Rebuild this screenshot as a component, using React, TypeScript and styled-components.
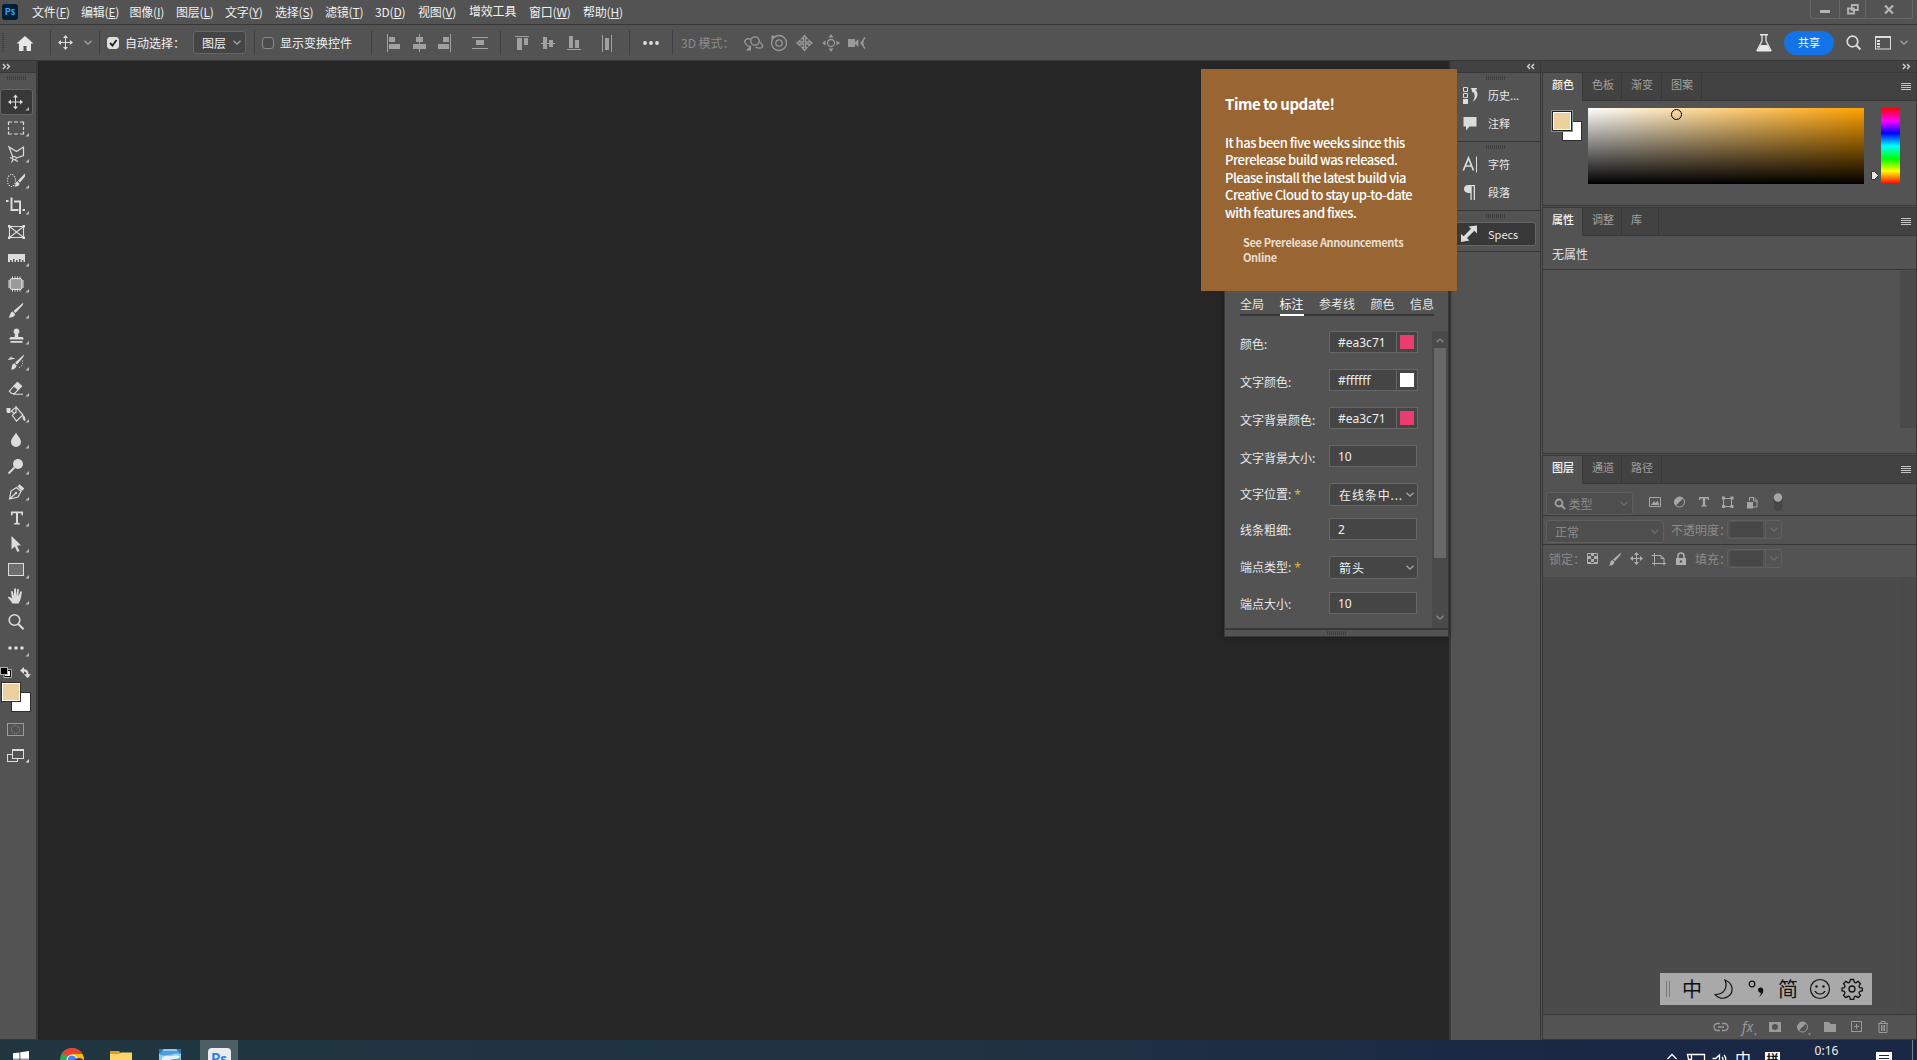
import {FC, ReactNode} from 'react';
import styled, {createGlobalStyle, css} from 'styled-components';

const CJK = `"Noto Sans CJK SC", sans-serif`;
const LINE = '#383838';
const CHROME = '#535353';

const GlobalStyle = createGlobalStyle`
    body {
        margin: 0;
        overflow: hidden;
        background: #262626;
    }
    * {
        box-sizing: border-box;
    }
    svg {
        display: block;
        flex: none;
    }
`;

const Screen = styled.div`
    width: 1917px;
    height: 1060px;
    display: flex;
    flex-direction: column;
    position: relative;
    overflow: hidden;
    background: ${CHROME};
    color: #f0f0f0;
    font-family: ${CJK};
    font-size: 12px;
    white-space: nowrap;
`;

/* ---------- menu bar ---------- */

const MenuBar = styled.header`
    display: flex;
    align-items: center;
    height: 25px;
    flex: none;
    border-bottom: 1px solid ${LINE};
`;

const PsBadge = styled.div`
    width: 16px;
    height: 16px;
    margin: 0 14px 0 2px;
    border-radius: 3px;
    background: #001e36;
    color: #31a8ff;
    font: 700 9px/15px ${CJK};
    text-align: center;
`;

const MenuItem = styled.span<{ $w: number; $up?: boolean }>`
    width: ${p => p.$w}px;
    flex: none;
    letter-spacing: -0.2px;
    line-height: 18px;
    padding-bottom: ${p => (p.$up ? 3 : 1)}px;
`;

const WindowButtons = styled.div`
    display: flex;
    width: 103px;
    height: 19px;
    margin: 0 4px 5px auto;
    border: 1px solid #666;
    border-top: 0;
    border-radius: 0 0 3px 3px;
`;

const WindowButton = styled.div<{ $w: number }>`
    width: ${p => p.$w}px;
    display: flex;
    align-items: center;
    justify-content: center;
    & + & {
        border-left: 1px solid #666;
    }
`;

/* ---------- options bar ---------- */

const OptionsBar = styled.div`
    display: flex;
    align-items: center;
    height: 36px;
    flex: none;
    border-bottom: 1px solid ${LINE};
`;

const Slot = styled.div<{ $w: number; $justify?: string; $dim?: boolean }>`
    width: ${p => p.$w}px;
    flex: none;
    display: flex;
    align-items: center;
    justify-content: ${p => p.$justify || 'center'};
    color: ${p => (p.$dim ? '#8b8b8b' : '#f0f0f0')};
`;

const Divider = styled.i`
    width: 1px;
    height: 25px;
    flex: none;
    background: #404040;
`;

const Grip = styled.i<{ $vertical?: boolean }>`
    flex: none;
    display: block;
    ${p => p.$vertical ? css`
        width: 2px;
        height: 20px;
        background: repeating-linear-gradient(180deg, #3e3e3e 0 1px, transparent 1px 2px);
    ` : css`
        width: 20px;
        height: 4px;
        margin: 0 auto;
        background: repeating-linear-gradient(90deg, #3e3e3e 0 1px, transparent 1px 2px);
    `}
`;

const Checkbox = styled.span<{ $on?: boolean }>`
    width: 12px;
    height: 12px;
    flex: none;
    border-radius: 3px;
    border: 1px solid ${p => (p.$on ? '#e0e0e0' : '#8a8a8a')};
    background: ${p => (p.$on ? '#e0e0e0' : '#4c4c4c')};
`;

const Select = styled.div<{ $w: number; $h: number; $dim?: boolean; $pad?: number; $spread?: number }>`
    display: flex;
    align-items: center;
    justify-content: space-between;
    flex: none;
    width: ${p => p.$w}px;
    height: ${p => p.$h}px;
    padding: 0 ${p => (p.$spread ? 2 : 3)}px 0 ${p => p.$pad || 8}px;
    letter-spacing: ${p => p.$spread || 0}px;
    border: 1px solid ${p => (p.$dim ? '#5f5f5f' : '#666')};
    border-radius: 3px;
    background: ${p => (p.$dim ? '#4e4e4e' : '#454545')};
    color: ${p => (p.$dim ? '#8b8b8b' : '#f0f0f0')};
`;

const ShareButton = styled.button`
    width: 53px;
    height: 24px;
    margin: 0 12px 0 11px;
    padding: 0 0 1px;
    border: 0;
    border-radius: 12px;
    background: #1473e6;
    color: #fff;
    font: 11px/22px ${CJK};
`;

/* ---------- workspace ---------- */

const Workspace = styled.main`
    display: flex;
    height: 979px;
    flex: none;
`;

const Toolbar = styled.aside`
    display: flex;
    flex-direction: column;
    width: 38px;
    flex: none;
    border-right: 2px solid ${LINE};
    border-bottom: 1px solid ${LINE};
`;

const DockHeader = styled.div<{ $justify?: string }>`
    display: flex;
    align-items: center;
    justify-content: ${p => p.$justify || 'flex-start'};
    height: 12px;
    flex: none;
    padding: 0 5px 0 2px;
    background: #424242;
    border-bottom: 1px solid ${LINE};
`;

const ToolGrip = styled.div`
    padding-top: 3px;
`;

const ToolList = styled.div`
    margin-top: 9px;
`;

const ToolCell = styled.div<{ $active?: boolean }>`
    width: 33px;
    height: 26px;
    border-radius: 3px;
    background: ${p => (p.$active ? '#383838' : 'transparent')};
    box-shadow: ${p => (p.$active ? 'inset 0 0 0 1px #666' : 'none')};
`;

const Canvas = styled.section`
    flex: 1;
    background: #262626;
`;

const IconDock = styled.aside`
    display: flex;
    flex-direction: column;
    width: 92px;
    flex: none;
    border-left: 2px solid ${LINE};
    border-right: 1px solid ${LINE};
`;

const DockGroup = styled.div<{ $h: number }>`
    height: ${p => p.$h}px;
    padding-top: 3px;
    border-bottom: 1px solid ${LINE};
`;

const DockButton = styled.div<{ $active?: boolean; $h: number }>`
    display: flex;
    align-items: center;
    gap: 8px;
    width: 85px;
    height: ${p => p.$h}px;
    padding-left: 9px;
    font-size: 11px;
    color: #e8e8e8;
    border-radius: 3px;
    background: ${p => (p.$active ? '#383838' : 'transparent')};
    box-shadow: ${p => (p.$active ? 'inset 0 0 0 1px #666' : 'none')};
`;

const SpecsSpacer = styled.i`
    display: block;
    height: 4px;
`;

const PanelDock = styled.aside`
    display: flex;
    flex-direction: column;
    width: 376px;
    flex: none;
    border-right: 1px solid ${LINE};
`;

const Panel = styled.section<{ $h: number }>`
    display: flex;
    flex-direction: column;
    height: ${p => p.$h}px;
    flex: none;
    margin-left: 1px;
    border-left: 1px solid ${LINE};
    border-bottom: 1px solid ${LINE};
    & + & {
        margin-top: 1px;
        border-top: 1px solid ${LINE};
    }
`;

const TabStrip = styled.div`
    display: flex;
    height: 28px;
    flex: none;
    background: #424242;
`;

const Tab = styled.div<{ $w: number; $active?: boolean }>`
    width: ${p => p.$w}px;
    height: 28px;
    padding-left: 9px;
    font-size: 11px;
    line-height: 23px;
    font-weight: ${p => (p.$active ? 500 : 400)};
    color: ${p => (p.$active ? '#f5f5f5' : '#a0a0a0')};
    background: ${p => (p.$active ? CHROME : '#424242')};
    border-right: 1px solid ${LINE};
    border-bottom: 1px solid ${p => (p.$active ? CHROME : LINE)};
`;

const TabRest = styled.div`
    flex: 1;
    display: flex;
    align-items: center;
    justify-content: flex-end;
    padding-right: 5px;
    border-bottom: 1px solid ${LINE};
`;

const ColorBody = styled.div`
    display: flex;
    padding: 7px 0 0 8px;
`;

const Ramp = styled.div`
    width: 276px;
    height: 76px;
    margin-left: 5px;
    position: relative;
    background: linear-gradient(180deg, transparent, #000), linear-gradient(90deg, #fff, #ffa200);
`;

const RampMarker = styled.i`
    position: absolute;
    left: 83px;
    top: 1px;
    width: 11px;
    height: 11px;
    border: 1px solid #000;
    border-radius: 50%;
`;

const HueBar = styled.div`
    width: 19px;
    height: 76px;
    background: linear-gradient(180deg, #f00, #f0f 17%, #00f 33%, #0ff 50%, #0f0 67%, #ff0 83%, #f00);
`;

const PropertiesNote = styled.div`
    height: 34px;
    padding-left: 9px;
    line-height: 36px;
    color: #e0e0e0;
    border-bottom: 1px solid ${LINE};
`;

const PropsScroll = styled.div`
    padding-top: 1px;
`;

const ScrollGutter = styled.div<{ $h: number }>`
    width: 16px;
    height: ${p => p.$h}px;
    margin-left: auto;
    background: #4a4a4a;
`;

const LayerRow = styled.div<{ $h: number; $top: number; $plain?: boolean }>`
    display: flex;
    align-items: flex-start;
    height: ${p => p.$h}px;
    flex: none;
    padding: ${p => p.$top}px 0 0 3px;
    color: #8b8b8b;
    border-bottom: ${p => (p.$plain ? 'none' : `1px solid ${LINE}`)};
`;

const RowLabel = styled.span<{ $w: number; $ml: number }>`
    width: ${p => p.$w}px;
    margin-left: ${p => p.$ml}px;
    flex: none;
    line-height: 19px;
`;

const NumberBox = styled.div`
    display: flex;
    align-items: center;
    width: 55px;
    height: 19px;
    padding-left: 2px;
    border: 1px solid #5f5f5f;
    border-radius: 3px;
`;

const NumberValue = styled.i`
    width: 34px;
    height: 15px;
    background: #474747;
    margin-right: 2px;
`;

const NumberArrow = styled.span`
    display: flex;
    align-items: center;
    justify-content: center;
    width: 16px;
    height: 17px;
    border-left: 1px solid #5f5f5f;
`;

const LayerList = styled.div`
    flex: 1;
    background: #4b4b4b;
    border-bottom: 1px solid ${LINE};
`;

const LayerFooter = styled.div`
    display: flex;
    align-items: center;
    justify-content: flex-end;
    height: 24px;
    flex: none;
    padding: 0 25px 1px 0;
`;

/* ---------- floating parts ---------- */

const SpecsPanel = styled.section`
    position: absolute;
    left: 1224px;
    top: 280px;
    width: 225px;
    height: 357px;
    display: flex;
    flex-direction: column;
    background: ${CHROME};
    border: 1px solid ${LINE};
    font-family: "Noto Sans", ${CJK};
    box-shadow: 0 0 6px rgba(0, 0, 0, 0.3);
`;

const SpecsTabs = styled.nav`
    display: flex;
    gap: 15.5px;
    width: 194px;
    height: 35px;
    flex: none;
    margin-left: 15px;
    padding-top: 15px;
    line-height: 18px;
    border-bottom: 2px solid ${LINE};
`;

const SpecsTab = styled.span<{ $active?: boolean }>`
    height: 20px;
    color: ${p => (p.$active ? '#fff' : '#e4e4e4')};
    border-bottom: 2px solid ${p => (p.$active ? '#fff' : 'transparent')};
`;

const SpecsBody = styled.div`
    display: flex;
    justify-content: space-between;
    height: 314px;
    flex: none;
    padding-top: 15px;
    border-bottom: 2px solid ${LINE};
`;

const SpecsForm = styled.div`
    padding-left: 15px;
`;

const SpecsRow = styled.div<{ $h: number; $down?: number }>`
    display: flex;
    height: ${p => p.$h}px;
    span:first-child {
        width: 89px;
        line-height: 23px;
        padding-top: ${p => p.$down || 0}px;
        color: #e8e8e8;
    }
`;

const Star = styled.b`
    margin-left: 3px;
    font-weight: 400;
    color: #d9b83c;
`;

const Field = styled.div<{ $w?: number }>`
    display: flex;
    width: ${p => p.$w || 88}px;
    height: 22px;
    padding-left: 8px;
    line-height: 21px;
    justify-content: space-between;
    border: 1px solid #666;
    background: #454545;
`;

const Chip = styled.i<{ $color: string }>`
    width: 20px;
    height: 20px;
    border: 3px solid #454545;
    background: ${p => p.$color};
    box-shadow: -1px 0 0 #666;
`;

const SpecsScroll = styled.div`
    display: flex;
    flex-direction: column;
    align-items: center;
    width: 16px;
    height: 297px;
    padding: 6px 0 7px;
    background: #4a4a4a;
`;

const SpecsThumb = styled.i`
    width: 12px;
    height: 210px;
    margin: 4px 0 auto;
    background: #686868;
`;

const SpecsFoot = styled.div`
    display: flex;
    align-items: center;
    justify-content: center;
    flex: 1;
`;

const Notice = styled.section`
    position: absolute;
    left: 1201px;
    top: 69px;
    width: 256px;
    height: 222px;
    padding: 24px 24px 0;
    background: #996633;
    color: #fff;
    font-weight: 500;
    letter-spacing: -0.5px;
    h3 {
        margin: 0 0 18px;
        font-size: 15px;
        line-height: 22px;
        font-weight: 700;
    }
    p {
        margin: 0 0 14px;
        padding-top: 1px;
        font-size: 13px;
        line-height: 17.4px;
    }
    a {
        display: block;
        margin-left: 18px;
        font-size: 11px;
        line-height: 15px;
        font-weight: 700;
        letter-spacing: -0.35px;
        color: #e8ddd2;
    }
`;

const ImeBar = styled.div`
    position: absolute;
    left: 1660px;
    top: 973px;
    width: 212px;
    height: 32px;
    display: flex;
    align-items: center;
    padding-left: 6px;
    background: #a9a9a9;
    color: #111;
    font-size: 20px;
    line-height: 30px;
`;

const ImeHandle = styled.i`
    width: 4px;
    height: 16px;
    margin-right: 6px;
    border: solid #777;
    border-width: 0 1px;
`;

const ImeSlot = styled.span`
    width: 32px;
    display: flex;
    justify-content: center;
`;

const Taskbar = styled.footer`
    display: flex;
    height: 20px;
    flex: none;
    overflow: hidden;
    background: linear-gradient(90deg, #20363f, #1f3342 50%, #1a2745 85%, #1a2744);
`;

const TaskApp = styled.div<{ $w: number; $active?: boolean; $top: number }>`
    width: ${p => p.$w}px;
    height: 20px;
    flex: none;
    display: flex;
    justify-content: center;
    padding-top: ${p => p.$top}px;
    background: ${p => (p.$active ? '#4d5f66' : 'transparent')};
`;

const PsTile = styled.div`
    width: 23px;
    height: 24px;
    flex: none;
    border-radius: 4px;
    background: #e9ebee;
    color: #2680eb;
    font: 700 14px/20px ${CJK};
    text-align: center;
`;

const Tray = styled.div`
    display: flex;
    margin-left: auto;
`;

const Clock = styled.div`
    width: 66px;
    padding-left: 1px;
    font: 12px/21px "Noto Sans", sans-serif;
    text-align: center;
`;

const ShowDesktop = styled.i`
    width: 5px;
    margin-left: 17px;
    border-left: 1px solid #76808f;
`;

/* ---------- icons ---------- */

interface IconProps {
    w: number;
    h: number;
    color?: string;
    children: ReactNode;
}

const Icon: FC<IconProps> = ({w, h, color = '#dcdcdc', children}) => (
    <svg width={w} height={h} viewBox={`0 0 ${w} ${h}`} fill={color} stroke={color} strokeWidth={0}>{children}</svg>
);

const Chevron: FC<{ color?: string; up?: boolean }> = ({color = '#a8a8a8', up}) => (
    <Icon w={10} h={7} color={color}>
        <path d={up ? 'M1.5 5l3.5-3 3.5 3' : 'M1.5 1.8L5 5.2l3.5-3.4'} fill="none" strokeWidth={1.3}/>
    </Icon>
);

const Arrows: FC<{ right?: boolean }> = ({right}) => (
    <Icon w={9} h={7} color="#d0d0d0">
        <path d={right ? 'M1 1l2.4 2.5L1 6M5 1l2.4 2.5L5 6' : 'M4 1L1.6 3.5 4 6M8 1L5.6 3.5 8 6'} fill="none" strokeWidth={1.4}/>
    </Icon>
);

const Burger = () => (
    <Icon w={10} h={8} color="#c4c4c4"><path d="M0 0h10v1H0zM0 2h10v1H0zM0 4h10v1H0zM0 6h10v1H0z"/></Icon>
);

const MoveIcon: FC = () => (
    <Icon w={15} h={15}>
        <path d="M7 2h1v11H7zM2 7h11v1H2zM7.5 0L10 3H5zM7.5 15L5 12h5zM0 7.500L3 5v5zM15 7.500L12 10V5z"/>
    </Icon>
);

// every tool is drawn on a 32x26 cell whose centre is 16,13
const tools: { name: string; flyout?: boolean; art: ReactNode }[] = [
    {name: 'move', flyout: true, art: <path d="M15 7.5h1v11h-1zM10 12.5h11v1H10zM15.5 5.5L18 8.5h-5zM15.5 20.5l-2.500-3h5zM8 13l3-2.500v5zM23 13l-3 2.500v-5z"/>},
    {name: 'marquee', flyout: true, art: <path d="M8.5 10V7h3.500M14 7h4M20 7h3.500v3M23.500 12v3M23.500 16.500v2.500H20M18 19h-4M12 19H8.500v-2.500M8.500 15v-3" fill="none" strokeWidth={1.2}/>},
    {name: 'lasso', flyout: true, art: <>
        <path d="M13 16.500L9 6l7.500 4.500L23.500 6v8.500L16.500 17" fill="none" strokeWidth={1.2}/>
        <path d="M12.500 16a2.200 1.500 0 1 1 3 2.500c-2 .8-4-.5-3-2.500zM13 18.500l-1.500 3M10 16.500l8 4" fill="none" strokeWidth={1.1}/>
    </>},
    {name: 'quick-select', flyout: true, art: <>
        <ellipse cx="11.500" cy="13.500" rx="4" ry="6" fill="none" strokeWidth={1.1} strokeDasharray="1.200 1.200"/>
        <path d="M25 6.500v3l-5 6-2-2zM17.200 14.200l2.300 2.200c-.5 3-3 3-5 3.100 1.200-1 .5-4.500 2.700-5.300z"/>
    </>},
    {name: 'crop', flyout: true, art: <path d="M6 7h2.500v2H6zM10.500 4.500h2V16h6v2h-8zM14 7.500h7V21h-2V9.500h-5zM22.500 16H25v2h-2.500z"/>},
    {name: 'frame', art: <>
        <path d="M9.500 7.500h14v11h-14zM9.500 7.500l14 11M23.500 7.500l-14 11" fill="none" strokeWidth={1.1}/>
        <path d="M8 6h2.500v2.500H8zM22.500 6H25v2.500h-2.500zM8 17.500h2.500V20H8zM22.500 17.500H25V20h-2.500z"/>
    </>},
    {name: 'ruler', flyout: true, art: <path d="M8 9h17v8h-1.500v-2h-1.500v2H20.500v-3h-1.500v3H17.500v-2H16v2h-1.500v-3H13v3h-1.500v-2H10v2H8z"/>},
    {name: 'patch', flyout: true, art: <>
        <rect x="10" y="7.500" width="12" height="11" rx="2" fill="#9a9a9a" strokeWidth={1}/>
        <path d="M12.500 5.500v3M15 5.500v3M17.500 5.500v3M20 5.500v3M12.500 17.500v3M15 17.500v3M17.500 17.500v3M20 17.500v3M8 10h3M8 12h3M8 14h3M8 16h3M21 10h3M21 12h3M21 14h3M21 16h3" strokeWidth={1}/>
    </>},
    {name: 'brush', flyout: true, art: <path d="M23.500 5.500l-.7 2.600-7.300 8-2-2zM12.600 14.500l2.500 2.400c-.5 3.300-3.500 3.600-6.600 3.600 1.800-1.200 1.300-5.300 4.100-6z"/>},
    {name: 'stamp', flyout: true, art: <path d="M16.500 5.500a3 3 0 0 1 1.600 5.500l.3 3H22c1.300 0 1.500 1 1.500 2.500h-14C9.500 15 9.700 14 11 14h3.600l.3-3a3 3 0 0 1 1.600-5.500zM10.500 18h12v1.800h-12z"/>},
    {name: 'history-brush', flyout: true, art: <>
        <path d="M24 5.500l-.7 2.600-6.300 7.500-2-1.800zM14.200 14.200l2.400 2.200c-.5 3.300-3.500 4.100-5.600 4.100 1.300-1.700.4-5.600 3.200-6.300zM7.500 11l4-3.800V9c1.500-.5 3 0 3.800 1.300-1.300-.5-2.500-.5-3.800.2z"/>
        <path d="M22.500 11.500c.5 4-1 6.500-4 7.500" fill="none" strokeWidth={1} strokeDasharray="1 1.500"/>
    </>},
    {name: 'eraser', flyout: true, art: <>
        <path d="M17.500 7l4.500 4-4 4.200-4.800-4.200z"/>
        <path d="M17.300 7.400l4.300 3.800-7 7.300h-3l-2.300-2.300zM13 19.300h10" fill="none" strokeWidth={1.1}/>
    </>},
    {name: 'bucket', flyout: true, art: <>
        <path d="M6.500 7h4v5h-3l-1-1zM22.500 14c2.500 1 3.500 3 2.700 6-1.700 0-2.900-2-2.700-6z"/>
        <path d="M11 10c2-.5 3-3.500 5.500-3.500l6.500 7.500-6.500 6-4.500-6M11 10l4 2.500M16 5v7M12.500 14l4-3.500" fill="none" strokeWidth={1.2}/>
    </>},
    {name: 'blur', flyout: true, art: <path d="M16 5.500c1.500 3.500 5 5.800 5 9.500a5 5 0 0 1-10 0c0-3.700 3.500-6 5-9.500z"/>},
    {name: 'dodge', flyout: true, art: <><circle cx="18" cy="11" r="5"/><path d="M14.500 14.500l-6 6" strokeWidth={1.800}/></>},
    {name: 'pen', flyout: true, art: <>
        <path d="M9.500 20l1.500-8 5.500-3.500 4.500 4L18 18zM9.500 20l6-5.500" fill="none" strokeWidth={1.2}/>
        <circle cx="16" cy="14" r="1.200"/><path d="M17.500 7.500l2-2.200 4.800 4.200-2.300 2.500z"/>
    </>},
    {name: 'type', flyout: true, art: <path d="M11 6.500h12v4h-1.200l-.6-2.300H18v9.600l2 .7v1h-6v-1l2-.7V8.200h-3.200l-.6 2.300H11z"/>},
    {name: 'path-select', flyout: true, art: <path d="M11.500 5v13.500l3.200-3 2.800 5.500 2-1-2.500-5.300 4-.5z"/>},
    {name: 'rectangle', flyout: true, art: <rect x="8.500" y="6.500" width="15" height="12" fill="#6e6e6e" strokeWidth={1}/>},
    {name: 'hand', flyout: true, art: <path d="M12.500 20.500C11 18 9 16 8 14.200c.8-1 2-.4 3.200.8l.8.700-1-7c.1-1.100 1.500-1.100 1.800 0l1 4.300.4-7c.2-1 1.700-1 1.800 0v7l1.200-6.500c.3-1 1.700-.8 1.700.2l-.6 6.800 2-4.700c.5-.9 1.800-.5 1.600.5-.7 3.500-.9 8-3.400 11.200z"/>},
    {name: 'zoom', art: <><circle cx="14.500" cy="11" r="5.300" fill="none" strokeWidth={1.600}/><path d="M18.300 15l5.200 5.300" strokeWidth={2}/></>},
    {name: 'more', flyout: true, art: <><circle cx="10" cy="13" r="1.800"/><circle cx="16" cy="13" r="1.800"/><circle cx="22" cy="13" r="1.800"/></>},
];

const Tools = () => (
    <ToolList>
        {tools.map((tool, i) => (
            <ToolCell key={tool.name} $active={i === 0}>
                <Icon w={32} h={26}>
                    {tool.art}
                    {tool.flyout && <path d="M29 18v3.500h-3.500z" fill="#bdbdbd"/>}
                </Icon>
            </ToolCell>
        ))}
        <Icon w={34} h={120}>
            {/* default and swap colours */}
            <rect x="4.500" y="9.500" width="6" height="6" fill="#fff" stroke="#000" strokeWidth={1}/>
            <path d="M4 8.500h7.500v8H4z" fill="none" stroke="#b0b0b0" strokeWidth={1}/>
            <rect x="0.500" y="6.500" width="7" height="7" fill="#000" stroke="#b0b0b0" strokeWidth={1}/>
            <path d="M20 9.500l4-3.500v2.300c3 0 4.500 1.500 4.500 5H31l-3.500 4-3.500-4h2.500c0-2-.6-2.800-2.500-2.800v2.500z"/>
            <rect x="11.500" y="31.500" width="19" height="19" fill="#fff" stroke="#2e2e2e" strokeWidth={1}/>
            <rect x="1.500" y="21.500" width="19" height="19" fill="#fff" stroke="#2e2e2e" strokeWidth={1}/>
            <rect x="3" y="23" width="16" height="16" fill="#ead09c"/>
            {/* quick mask */}
            <rect x="7.500" y="62.500" width="16" height="12" fill="none" stroke="#9c9c9c" strokeWidth={1}/>
            <circle cx="15.500" cy="68.500" r="4" fill="none" stroke="#9c9c9c" strokeWidth={1} strokeDasharray="1 1.200"/>
            {/* screen mode */}
            <rect x="7.500" y="93.500" width="10" height="7" fill="none" strokeWidth={1}/>
            <rect x="12.500" y="88.500" width="11" height="9" fill={CHROME} strokeWidth={1}/>
            <path d="M12 88h12v2H12zM29 98v3.500h-3.500z"/>
        </Icon>
    </ToolList>
);

const menus: [string, string, number][] = [
    ['文件', 'F', 49], ['编辑', 'E', 48.5], ['图像', 'I', 46.5], ['图层', 'L', 49], ['文字', 'Y', 50],
    ['选择', 'S', 50], ['滤镜', 'T', 50], ['3D', 'D', 43], ['视图', 'V', 51], ['增效工具', '', 60],
    ['窗口', 'W', 54], ['帮助', 'H', 50],
];

const alignArt: { w: number; d: string }[] = [
    {w: 26, d: 'M6 2h1v18H6zM8 5h6v5H8zM8 12h11v5H8z'},
    {w: 25, d: 'M12 2h1v18h-1zM9 5h7v5H9zM6 12h13v5H6z'},
    {w: 26, d: 'M18 2h1v18h-1zM11 5h6v5h-6zM6 12h11v5H6z'},
    {w: 42, d: 'M14 5h16v1H14zM14 16h16v1H14zM18 8h8v5h-8z'},
];

const alignArt2: { w: number; d: string }[] = [
    {w: 35, d: 'M14 4h14v1H14zM16 6h5v12h-5zM23 6h4v7h-4z'},
    {w: 25, d: 'M5 11h14v1H5zM7 5h4v12H7zM13 8h4v7h-4z'},
    {w: 27, d: 'M6 17h14v1H6zM8 4h4v12H8zM14 8h4v8h-4z'},
    {w: 41, d: 'M14 3h1v17h-1zM23 3h1v17h-1zM17 6h4v12h-4z'},
];

const OptionsContent = () => (
    <OptionsBar>
        <Slot $w={5}><Grip $vertical/></Slot>
        <Slot $w={45} $justify="flex-start">
            <Icon w={32} h={18} color="#e6e6e6"><path d="M20 2l8.500 7.500H26V17h-4.500v-5h-3v5H14V9.500h-2.500z"/></Icon>
        </Slot>
        <Divider/>
        <Slot $w={29}><MoveIcon/></Slot>
        <Slot $w={19} $justify="flex-start"><Slot $w={15}><Chevron/></Slot></Slot>
        <Divider/>
        <Slot $w={25}>
            <Checkbox $on>
                <Icon w={10} h={10} color="#222"><path d="M2 5l2.500 2.500L8.500 2" fill="none" strokeWidth={1.800}/></Icon>
            </Checkbox>
        </Slot>
        <Slot $w={68} $justify="flex-start">自动选择：</Slot>
        <Select $w={53} $h={23}>图层<Chevron/></Select>
        <Slot $w={8}/>
        <Divider/>
        <Slot $w={25}><Checkbox/></Slot>
        <Slot $w={91} $justify="flex-start">显示变换控件</Slot>
        <Divider/>
        <Slot $w={9}/>
        {alignArt.map(a => <Icon key={a.d} w={a.w} h={22} color="#a0a0a0"><path d={a.d}/></Icon>)}
        <Divider/>
        {alignArt2.map(a => <Icon key={a.d} w={a.w} h={22} color="#a0a0a0"><path d={a.d}/></Icon>)}
        <Divider/>
        <Slot $w={42}>
            <Icon w={16} h={6} color="#e0e0e0"><circle cx="2" cy="3" r="1.900"/><circle cx="8" cy="3" r="1.900"/><circle cx="14" cy="3" r="1.900"/></Icon>
        </Slot>
        <Divider/>
        <Slot $w={68} $justify="flex-end"><Slot $w={60} $justify="flex-start" $dim>3D 模式：</Slot></Slot>
        <Icon w={130} h={20} color="#999">
            <g fill="none" strokeWidth={1.300}>
                <circle cx="14" cy="8" r="4.200"/>
                <path d="M9.500 6C5 5 2.500 7.500 4.500 10.500c1 1.500 2.500 2.500 4 3M18 8.500c3 2 4.500 4.500 3 6-1.500 1-4.500.5-6.500-.5"/>
                <circle cx="38" cy="10" r="7.500"/><circle cx="38" cy="10" r="3.200"/>
                <path d="M63.500 2.500l2.500 3h-1.500v3.500H68V7.500l3 2.500-3 2.500V11h-3.500v3.500H66l-2.500 3-2.500-3h1.500V11H59v1.500L56 10l3-2.500V9h3.500V5.500H61z"/>
                <circle cx="90" cy="10" r="3.500"/>
                <path d="M124 4.500l-4 5.500 4 5.500M122.500 7.500a4 4 0 0 0 0 5"/>
            </g>
            <path d="M10 12v5.500H5zM30 6l1-4 4 2zM90 1l2.500 3.500h-5zM90 19l-2.500-3.500h5zM81 10l3.500-2.500v5zM99 10l-3.500 2.500v-5zM107 6h7v3l3.500-3v8l-3.500-3v3h-7z"/>
        </Icon>
        <Slot $w={902} $justify="flex-end">
            <Icon w={18} h={20} color="#e8e8e8">
                <path d="M5 1h8v1.500H5z"/>
                <path d="M7 2v6L2 17.500h14L11 8V2" fill="none" strokeWidth={1.200}/><path d="M5.500 12h7l3.500 6.500H2z"/>
            </Icon>
        </Slot>
        <ShareButton>共享</ShareButton>
        <Icon w={16} h={16}><circle cx="6.500" cy="6.500" r="5.300" fill="none" strokeWidth={1.700}/><path d="M10.300 10.300l4.200 4.200" strokeWidth={2}/></Icon>
        <Slot $w={13}/>
        <Icon w={16} h={14}><path d="M.5 1h15v12H.5z" fill="none" strokeWidth={1.100}/><path d="M0 0h16v2H0zM2 4h3v2H2zM2 7h3v2H2zM2 10h3v1.500H2z"/></Icon>
        <Slot $w={26}><Chevron/></Slot>
    </OptionsBar>
);

const historyIcon = <Icon w={20} h={20}>
    <path d="M3.500 2.500h4v4h-4zM3.500 8.500h4v4h-4z" fill="none" strokeWidth={1}/>
    <path d="M3 14h5v5H3zM11 3h6v1.500h-2c4 3 3 9-2.500 12.500 3-4.500 2.700-8 .3-10.500V8.500z"/>
</Icon>;
const noteIcon = <Icon w={20} h={20}><path d="M3.500 4h13v9.500h-7L6 17.500v-4H3.500z"/></Icon>;
const charIcon = <Icon w={20} h={20}>
    <path d="M3.300 16.500L8.500 4l5 12.500M5 12h7" fill="none" strokeWidth={1.700}/><path d="M16 2.500h1v16h-1z"/>
</Icon>;
const paraIcon = <Icon w={20} h={20}><path d="M8.500 3H15v15h-1.300V4.300h-2V18h-1.300v-7C6 11.200 4 9.500 4 7s1.800-4 4.500-4z"/></Icon>;
const specsIcon = <Icon w={20} h={20}><path d="M17 1.500v8l-2.700-2.700-7.300 7.300 2.500 2.400-8.500 1.500v-8l2.700 2.200 7.300-7.400L8.500 2.500z"/></Icon>;

const Tabs: FC<{ items: [string, number][] }> = ({items}) => (
    <TabStrip>
        {items.map(([name, w], i) => <Tab key={name} $w={w} $active={i === 0}>{name}</Tab>)}
        <TabRest><Burger/></TabRest>
    </TabStrip>
);

const NumberField = () => (
    <NumberBox><NumberValue/><NumberArrow><Chevron color="#6c6c6c"/></NumberArrow></NumberBox>
);

const ColorPanel = () => (
    <Panel $h={133}>
        <Tabs items={[['颜色', 40], ['色板', 39], ['渐变', 40], ['图案', 40]]}/>
        <ColorBody>
            <Icon w={32} h={36}>
                <rect x="11.500" y="13.500" width="19" height="19" fill="#fff" stroke="#2e2e2e" strokeWidth={1}/>
                <rect x="0.500" y="2.500" width="21" height="21" fill="#222" stroke="#8c8c8c" strokeWidth={1}/>
                <rect x="2" y="4" width="18" height="18" fill="#fff"/>
                <rect x="3" y="5" width="16" height="16" fill="#ead09c"/>
            </Icon>
            <Ramp><RampMarker/></Ramp>
            <Icon w={17} h={76}><path d="M7.500 63.500h3l4 4-4 4h-3z" fill="#e6e6e6" stroke="#333" strokeWidth={1}/></Icon>
            <HueBar/>
        </ColorBody>
    </Panel>
);

const LayersPanel = () => (
    <Panel $h={585}>
        <Tabs items={[['图层', 40], ['通道', 39], ['路径', 40]]}/>
        <LayerRow $h={32} $top={8}>
            <Select $w={87} $h={23} $dim $pad={7}>
                <Icon w={12} h={12} color="#a0a0a0"><circle cx="5" cy="5" r="3.500" fill="none" strokeWidth={1.800}/><path d="M7.500 7.500l3.500 3.500" strokeWidth={2}/></Icon>
                <RowLabel $w={48} $ml={0}>类型</RowLabel>
                <Chevron color="#6c6c6c"/>
            </Select>
            <Icon w={160} h={24} color="#a6a6a6">
                <path d="M16.500 5.500h11v9h-11z" fill="none" strokeWidth={1}/>
                <path d="M18 13l3-4 1.500 2 2-2.500 2 4.500zM66 5h10v3h-1l-.7-1.500H72.200V13l1.500.5v1h-5.400v-1l1.500-.5V6.500h-2.100L67 8h-1z"/>
                <circle cx="46.500" cy="10" r="5" fill="none" strokeWidth={1}/>
                <path d="M50.300 6.200a5.400 5.400 0 0 0-7.600 7.600z"/>
                <path d="M90.500 6.500h8v8h-8z" fill="none" strokeWidth={1}/>
                <path d="M89 4.500h3v3h-3zM97.500 4.500h3v3h-3zM89 13h3v3h-3zM97.500 13h3v3h-3zM114 10h6v6.500h-6z"/>
                <path d="M116.500 9V5.500h4.500l3 3V15h-4M120.500 5.500V9h4" fill="none" strokeWidth={1}/>
                <rect x="140.500" y="2" width="9" height="17" rx="4.500" fill="#474747"/>
                <circle cx="145" cy="5.500" r="4.200"/>
            </Icon>
        </LayerRow>
        <LayerRow $h={29} $top={4}>
            <Select $w={118} $h={23} $dim>正常<Chevron color="#6c6c6c"/></Select>
            <RowLabel $w={56} $ml={7}>不透明度：</RowLabel>
            <NumberField/>
        </LayerRow>
        <LayerRow $h={32} $top={4} $plain>
            <RowLabel $w={37} $ml={3}>锁定：</RowLabel>
            <Icon w={101} h={20} color="#b0b0b0">
                <path d="M1.500 4.500h10v10h-10z" fill="none" strokeWidth={1}/>
                <path d="M5 4h3v3H5zM2 7h3v3H2zM8 7h3v3H8zM5 10h3v3H5zM2 13h3v1.500H2zM8 13h3v1.500H8z"/>
                <path d="M35 3.500l-.7 2.800-5.300 6-2-1.900zM26.300 11l2.200 2c-.5 3-3 3.500-5.500 3.500 1.500-1.200.8-4.900 3.300-5.500z"/>
                <path d="M50 5h1v9h-1zM46 9h9v1h-9zM50.500 3l2.500 3h-5zM50.500 16L48 13h5zM44 9.500L47 7v5zM57 9.500L54 12V7z"/>
                <path d="M68.500 4v12.500M65.500 6.500H75l3 3v7M66 14.500h14M75 6.500v3h3" fill="none" strokeWidth={1}/>
                <path d="M90 9h10v7H90z"/><path d="M92 9V7a3 3 0 0 1 6 0v2" fill="none" strokeWidth={1.500}/>
                <circle cx="95" cy="12.500" r="1.200" fill="#535353"/>
            </Icon>
            <RowLabel $w={32} $ml={8}>填充：</RowLabel>
            <NumberField/>
        </LayerRow>
        <LayerList><ScrollGutter $h={437}/></LayerList>
        <LayerFooter>
            <Icon w={178} h={18} color="#9a9a9a">
                <path d="M7 5.500H4.500a3.500 3.500 0 0 0 0 7H7M9 5.500h2.500a3.500 3.500 0 0 1 0 7H9M5 9h6" fill="none" strokeWidth={1.300}/>
                <path d="M56 4h12v10H56z"/><circle cx="62" cy="9" r="3" fill="#535353"/>
                <circle cx="89.500" cy="9" r="5" fill="none" strokeWidth={1}/><path d="M93.300 5.200a5.400 5.400 0 0 0-7.600 7.600z"/>
                <path d="M111 4h5l1.500 2H123v8h-12zM41 15.500h3l-1.500 2zM95 15.500h3l-1.500 2z"/>
                <path d="M138.500 3.500h10v10h-10zM143.500 6v5M141 8.500h5M165 5.500h10M168 5V3.500h4V5M166 6v8.500h8V6M168.500 7v6M170 7v6M171.500 7v6" fill="none" strokeWidth={1}/>
                <text x="29" y="14" fontSize="14" fontStyle="italic" fontFamily="Noto Sans, sans-serif">fx</text>
            </Icon>
        </LayerFooter>
    </Panel>
);

const Specs = () => (
    <SpecsPanel>
        <SpecsTabs>
            {['全局', '标注', '参考线', '颜色', '信息'].map(t => <SpecsTab key={t} $active={t === '标注'}>{t}</SpecsTab>)}
        </SpecsTabs>
        <SpecsBody>
            <SpecsForm>
                <SpecsRow $h={38} $down={2}><span>颜色:</span><Field $w={89}>#ea3c71<Chip $color="#ea3c71"/></Field></SpecsRow>
                <SpecsRow $h={38} $down={2}><span>文字颜色:</span><Field $w={89}>#ffffff<Chip $color="#fff"/></Field></SpecsRow>
                <SpecsRow $h={38} $down={2}><span>文字背景颜色:</span><Field $w={89}>#ea3c71<Chip $color="#ea3c71"/></Field></SpecsRow>
                <SpecsRow $h={38} $down={2}><span>文字背景大小:</span><Field>10</Field></SpecsRow>
                <SpecsRow $h={35}><span>文字位置:<Star>*</Star></span><Select $w={89} $h={23} $pad={9} $spread={0.9}>在线条中...<Chevron/></Select></SpecsRow>
                <SpecsRow $h={38} $down={1}><span>线条粗细:</span><Field>2</Field></SpecsRow>
                <SpecsRow $h={36}><span>端点类型:<Star>*</Star></span><Select $w={89} $h={23} $pad={9} $spread={0.9}>箭头<Chevron/></Select></SpecsRow>
                <SpecsRow $h={22} $down={1}><span>端点大小:</span><Field>10</Field></SpecsRow>
            </SpecsForm>
            <SpecsScroll><Chevron up color="#8c8c8c"/><SpecsThumb/><Chevron color="#8c8c8c"/></SpecsScroll>
        </SpecsBody>
        <SpecsFoot><Grip/></SpecsFoot>
    </SpecsPanel>
);

const Ime = () => (
    <ImeBar>
        <ImeHandle/>
        <ImeSlot>中</ImeSlot>
        <ImeSlot><Icon w={20} h={20} color="#111"><path d="M11 1c8 3 9.500 12 3 16.500-4.500 3-10.500 2-13-2C10 15.500 14 9 11 1z" fill="none" strokeWidth={1.200}/></Icon></ImeSlot>
        <ImeSlot>
            <Icon w={18} h={20} color="#111">
                <circle cx="5" cy="5" r="2.800" fill="none" strokeWidth={1.200}/><path d="M13.500 8.500a2.500 2.500 0 0 1 2.800 2.800c0 3-1.800 5.500-4.800 6.700 1.600-1.500 2.300-2.700 2.300-4.300a2.600 2.600 0 0 1-.3-5.200z"/>
            </Icon>
        </ImeSlot>
        <ImeSlot>简</ImeSlot>
        <ImeSlot>
            <Icon w={22} h={22} color="#111">
                <circle cx="11" cy="11" r="9.500" fill="none" strokeWidth={1.200}/><circle cx="7.500" cy="8.500" r="1.200"/><circle cx="14.500" cy="8.500" r="1.200"/>
                <path d="M6 13c2 4 8 4 10 0" fill="none" strokeWidth={1.200}/>
            </Icon>
        </ImeSlot>
        <ImeSlot>
            <Icon w={22} h={22} color="#111">
                <g fill="none" strokeWidth={1.300} strokeLinejoin="round">
                    <circle cx="11" cy="11" r="3"/>
                    <path d="M9.300 1.500h3.400l.5 2.700 1.600.7 2.300-1.600 2.400 2.400-1.600 2.300.7 1.600 2.700.5v2.800l-2.700.5-.7 1.600 1.600 2.300-2.400 2.400-2.300-1.600-1.600.7-.5 2.700H9.300l-.5-2.700-1.600-.7-2.300 1.600-2.400-2.400L4.100 15l-.7-1.600-2.400-.5v-2.800l2.400-.5L4.100 8 2.500 5.700l2.400-2.400 2.300 1.600 1.600-.7z"/>
                </g>
            </Icon>
        </ImeSlot>
    </ImeBar>
);

const TaskbarContent = () => (
    <Taskbar>
        <TaskApp $w={42} $top={11}>
            <Icon w={16} h={16} color="#fff"><path d="M0 2.300l6.500-.9v6.300H0zM7.300 1.200L16 0v7.700H7.300zM0 8.500h6.500v6L0 13.700zM7.300 8.500H16V16l-8.700-1.200z"/></Icon>
        </TaskApp>
        <TaskApp $w={60} $top={8}>
            <Icon w={24} h={24}>
                <circle cx="12" cy="12" r="12" fill="#34a853"/>
                <path d="M1.600 6a12 12 0 0 1 20.800 0L12 9z" fill="#ea4335"/>
                <path d="M22.400 6H12l6 12-6 6a12 12 0 0 0 10.400-18z" fill="#fbbc05"/>
                <circle cx="12" cy="12" r="5.500" fill="#fff"/><circle cx="12" cy="12" r="4.500" fill="#4285f4"/><circle cx="19" cy="17" r="7" fill="#4a2a80"/>
            </Icon>
        </TaskApp>
        <TaskApp $w={38} $top={11}>
            <Icon w={22} h={18}><path d="M0 0h9l1.500 2H22v16H0z" fill="#e0a020"/><path d="M0 3h9l2-1.500h11V18H0z" fill="#fcd66b"/></Icon>
        </TaskApp>
        <TaskApp $w={60} $top={9}>
            <Icon w={22} h={20}>
                <rect width="22" height="20" fill="#8fcbee"/><path d="M1 2h20v3c-6-2-12 3-20 1z" fill="#4f9cdb"/><path d="M3 9c5-4 7-1 10-2s5-1 7 0v13H3z" fill="#e4f3fa"/>
                <path d="M9 12c4-3 8-1 12-3v11H6z" fill="#55a58c"/><path d="M0 0h5L0 5zM22 0h-5l5 5z" fill="#2a74b8"/>
            </Icon>
        </TaskApp>
        <TaskApp $w={38} $active $top={8}><PsTile>Ps</PsTile></TaskApp>
        <Tray>
            <Icon w={132} h={20} color="#fff">
                <path d="M6.500 19l4.500-4.500 4.500 4.500M29.500 14.500h14v8h-14M26.500 14.500h4v5h-3zM51.500 18.500h3l4-3.500v8M61 17c1 1 1 3 .5 4M63 15c2 2 2 4 1.500 6" fill="none" strokeWidth={1.300}/>
                <text x="74" y="25" fontSize="16" strokeWidth={0} fontFamily={CJK}>中</text>
                <rect x="104" y="12" width="15" height="12"/>
                <text x="105.500" y="24" fontSize="12" fontWeight={700} fill="#111" fontFamily={CJK}>拼</text>
            </Icon>
            <Clock>0:16</Clock>
            <Icon w={36} h={20} color="#fff"><path d="M17 12h16v12H17z"/><path d="M20 15.500h10M20 18.500h10" stroke="#1a2744" strokeWidth={1}/></Icon>
            <ShowDesktop/>
        </Tray>
    </Taskbar>
);

export default function App() {
    return (
        <>
            <GlobalStyle/>
            <Screen>
                <MenuBar>
                    <PsBadge>Ps</PsBadge>
                    {menus.map(([label, key, w]) => (
                        <MenuItem key={label} $w={w} $up={!key}>{label}{key && <>(<u>{key}</u>)</>}</MenuItem>
                    ))}
                    <WindowButtons>
                        <WindowButton $w={28}><Icon w={10} h={9} color="#b4b4b4"><path d="M0 5h10v3H0z"/></Icon></WindowButton>
                        <WindowButton $w={27}>
                            <Icon w={12} h={11} color="#b4b4b4"><path d="M4.800 1h6v5h-6zM1 4.500h6v5H1z" fill="none" strokeWidth={1.800}/></Icon>
                        </WindowButton>
                        <WindowButton $w={47}><Icon w={10} h={9} color="#b4b4b4"><path d="M1 .5l8 8M9 .5l-8 8" strokeWidth={2.200}/></Icon></WindowButton>
                    </WindowButtons>
                </MenuBar>
                <OptionsContent/>
                <Workspace>
                    <Toolbar>
                        <DockHeader><Arrows right/></DockHeader>
                        <Slot $w={34}><ToolGrip><Grip/></ToolGrip></Slot>
                        <Tools/>
                    </Toolbar>
                    <Canvas/>
                    <IconDock>
                        <DockHeader $justify="flex-end"><Arrows/></DockHeader>
                        <DockGroup $h={69}>
                            <Grip/>
                            <DockButton $h={29}>{historyIcon}历史...</DockButton>
                            <DockButton $h={28}>{noteIcon}注释</DockButton>
                        </DockGroup>
                        <DockGroup $h={69}>
                            <Grip/>
                            <DockButton $h={29}>{charIcon}字符</DockButton>
                            <DockButton $h={28}>{paraIcon}段落</DockButton>
                        </DockGroup>
                        <DockGroup $h={41}>
                            <Grip/>
                            <SpecsSpacer/>
                            <DockButton $h={24} $active>{specsIcon}Specs</DockButton>
                        </DockGroup>
                    </IconDock>
                    <PanelDock>
                        <DockHeader $justify="flex-end"><Arrows right/></DockHeader>
                        <ColorPanel/>
                        <Panel $h={247}>
                            <Tabs items={[['属性', 40], ['调整', 39], ['库', 37]]}/>
                            <PropertiesNote>无属性</PropertiesNote>
                            <PropsScroll><ScrollGutter $h={157}/></PropsScroll>
                        </Panel>
                        <LayersPanel/>
                    </PanelDock>
                </Workspace>
                <TaskbarContent/>
                <Specs/>
                <Notice>
                    <h3>Time to update!</h3>
                    <p>
                        It has been five weeks since this<br/>
                        Prerelease build was released.<br/>
                        Please install the latest build via<br/>
                        Creative Cloud to stay up-to-date<br/>
                        with features and fixes.
                    </p>
                    <a>See Prerelease Announcements<br/>Online</a>
                </Notice>
                <Ime/>
            </Screen>
        </>
    );
}
